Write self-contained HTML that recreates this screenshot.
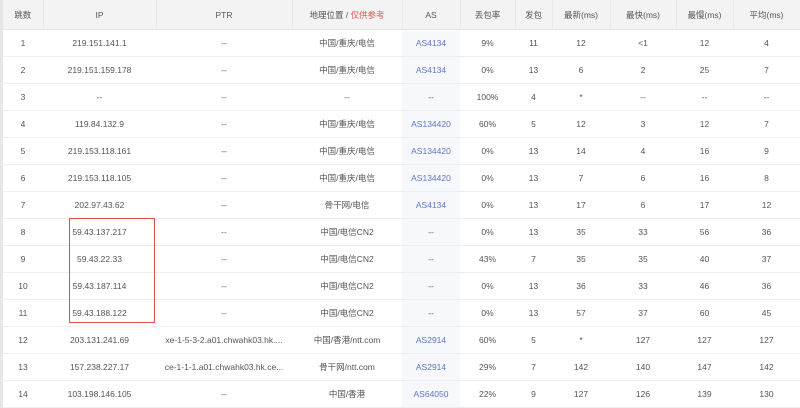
<!DOCTYPE html>
<html><head><meta charset="utf-8"><style>
body{margin:0;width:800px;height:405px;overflow:hidden;background:#fff;font-family:"Liberation Sans","Noto Sans CJK SC",sans-serif;}
.wrap{position:absolute;left:0;top:0;width:797px;border-left:3px solid #e6e6e6;}
table{border-collapse:collapse;table-layout:fixed;width:797px;font-size:8.5px;color:#555;}
td,th{text-align:center;padding:0;white-space:nowrap;overflow:hidden;}
th{height:29px;background:#f3f3f3;font-weight:normal;color:#555;border-right:1px solid #e8e8e8;border-bottom:1px solid #e6e6e6;}
td{height:26px;border-bottom:1px solid #eeeeee;}
td.as{background:#f7f8fc;color:#5b78c9;}
th.as{background:#f3f3f3;}
.red{color:#e2574c;}
.box{position:absolute;left:69px;top:218px;width:84px;height:103px;border:1px solid #d9534f;}
</style></head><body>
<div class="wrap"><table>
<colgroup><col style="width:40px"><col style="width:113px"><col style="width:136px"><col style="width:110px"><col style="width:58px"><col style="width:55px"><col style="width:37px"><col style="width:58px"><col style="width:66px"><col style="width:57px"><col style="width:67px"></colgroup>
<tr><th>跳数</th><th>IP</th><th>PTR</th><th>地理位置 / <span class="red">仅供参考</span></th><th class="as">AS</th><th>丢包率</th><th>发包</th><th>最新(ms)</th><th>最快(ms)</th><th>最慢(ms)</th><th>平均(ms)</th></tr>
<tr><td>1</td><td>219.151.141.1</td><td>--</td><td>中国/重庆/电信</td><td class="as">AS4134</td><td>9%</td><td>11</td><td>12</td><td>&lt;1</td><td>12</td><td>4</td></tr>
<tr><td>2</td><td>219.151.159.178</td><td>--</td><td>中国/重庆/电信</td><td class="as">AS4134</td><td>0%</td><td>13</td><td>6</td><td>2</td><td>25</td><td>7</td></tr>
<tr><td>3</td><td>--</td><td>--</td><td>--</td><td class="as" style="color:#555">--</td><td>100%</td><td>4</td><td>*</td><td>--</td><td>--</td><td>--</td></tr>
<tr><td>4</td><td>119.84.132.9</td><td>--</td><td>中国/重庆/电信</td><td class="as">AS134420</td><td>60%</td><td>5</td><td>12</td><td>3</td><td>12</td><td>7</td></tr>
<tr><td>5</td><td>219.153.118.161</td><td>--</td><td>中国/重庆/电信</td><td class="as">AS134420</td><td>0%</td><td>13</td><td>14</td><td>4</td><td>16</td><td>9</td></tr>
<tr><td>6</td><td>219.153.118.105</td><td>--</td><td>中国/重庆/电信</td><td class="as">AS134420</td><td>0%</td><td>13</td><td>7</td><td>6</td><td>16</td><td>8</td></tr>
<tr><td>7</td><td>202.97.43.62</td><td>--</td><td>骨干网/电信</td><td class="as">AS4134</td><td>0%</td><td>13</td><td>17</td><td>6</td><td>17</td><td>12</td></tr>
<tr><td>8</td><td>59.43.137.217</td><td>--</td><td>中国/电信CN2</td><td class="as" style="color:#555">--</td><td>0%</td><td>13</td><td>35</td><td>33</td><td>56</td><td>36</td></tr>
<tr><td>9</td><td>59.43.22.33</td><td>--</td><td>中国/电信CN2</td><td class="as" style="color:#555">--</td><td>43%</td><td>7</td><td>35</td><td>35</td><td>40</td><td>37</td></tr>
<tr><td>10</td><td>59.43.187.114</td><td>--</td><td>中国/电信CN2</td><td class="as" style="color:#555">--</td><td>0%</td><td>13</td><td>36</td><td>33</td><td>46</td><td>36</td></tr>
<tr><td>11</td><td>59.43.188.122</td><td>--</td><td>中国/电信CN2</td><td class="as" style="color:#555">--</td><td>0%</td><td>13</td><td>57</td><td>37</td><td>60</td><td>45</td></tr>
<tr><td>12</td><td>203.131.241.69</td><td>xe-1-5-3-2.a01.chwahk03.hk....</td><td>中国/香港/ntt.com</td><td class="as">AS2914</td><td>60%</td><td>5</td><td>*</td><td>127</td><td>127</td><td>127</td></tr>
<tr><td>13</td><td>157.238.227.17</td><td>ce-1-1-1.a01.chwahk03.hk.ce...</td><td>骨干网/ntt.com</td><td class="as">AS2914</td><td>29%</td><td>7</td><td>142</td><td>140</td><td>147</td><td>142</td></tr>
<tr><td>14</td><td>103.198.146.105</td><td>--</td><td>中国/香港</td><td class="as">AS64050</td><td>22%</td><td>9</td><td>127</td><td>126</td><td>139</td><td>130</td></tr>
</table></div>
<div class="box"></div>
</body></html>
